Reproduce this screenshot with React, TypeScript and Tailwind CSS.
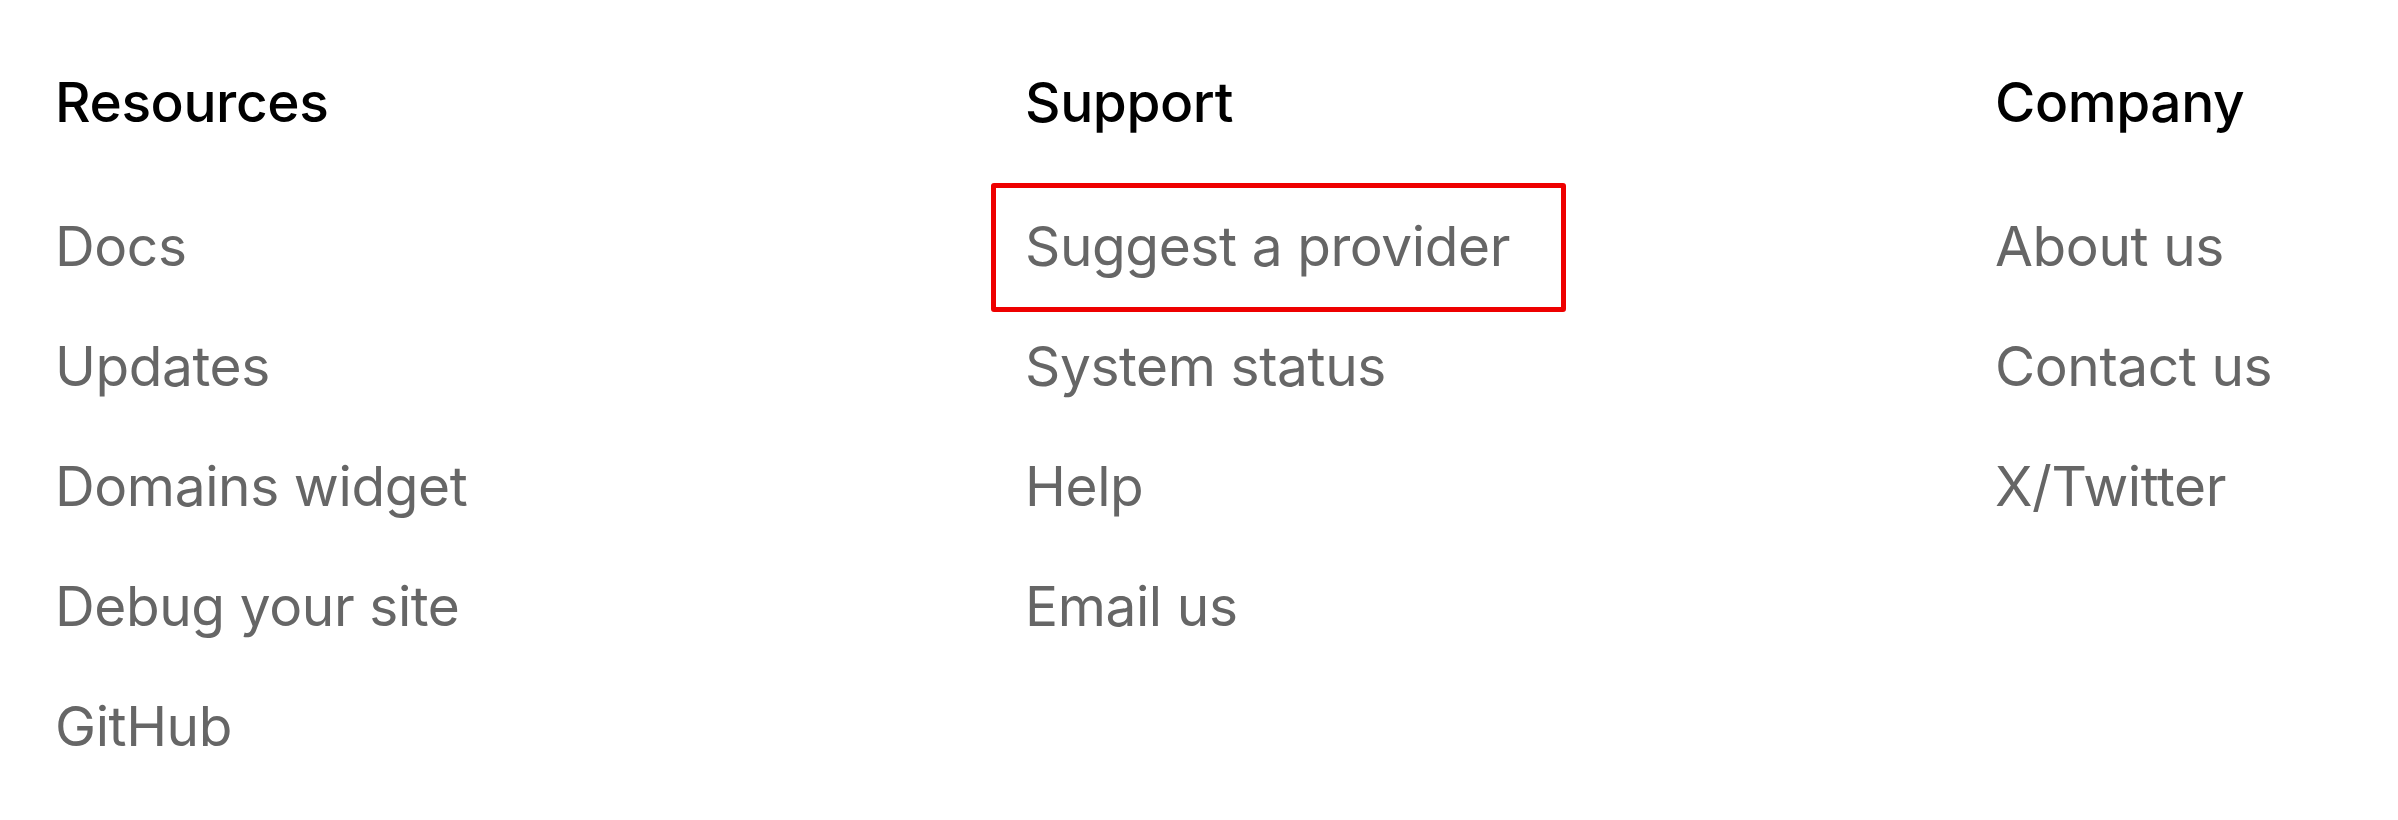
import React from 'react';

type FooterColumn = {
  title: string;
  links: string[];
};

const columns: FooterColumn[] = [
  {
    title: 'Resources',
    links: ['Docs', 'Updates', 'Domains widget', 'Debug your site', 'GitHub'],
  },
  {
    title: 'Support',
    links: ['Suggest a provider', 'System status', 'Help', 'Email us'],
  },
  {
    title: 'Company',
    links: ['About us', 'Contact us', 'X/Twitter'],
  },
];

// the highlighted link gets a red outline drawn on top of it
const highlighted = 'Suggest a provider';

export default function App() {
  return (
    <div className="min-h-[820px] w-full bg-white font-['Inter','Liberation_Sans',sans-serif] tracking-[-0.4px] overflow-hidden">
      <footer className="grid grid-cols-[970px_970px_1fr] pl-[55px] pt-[68px]">
        {columns.map((col) => (
          <div key={col.title} className="flex flex-col">
            <h3 className="text-[55px] leading-[68px] font-medium text-black">{col.title}</h3>
            <ul className="mt-[76px] flex flex-col gap-[52px]">
              {col.links.map((link) => (
                <li key={link} className="relative">
                  <a href="#" className="text-[55px] leading-[68px] text-[#666666] whitespace-nowrap">
                    {link}
                  </a>
                  {link === highlighted && (
                    <div className="pointer-events-none absolute -left-[34px] -top-[29px] w-[575px] h-[129px] border-[5px] border-[#ee0000] rounded-[3px]" />
                  )}
                </li>
              ))}
            </ul>
          </div>
        ))}
      </footer>
    </div>
  );
}
